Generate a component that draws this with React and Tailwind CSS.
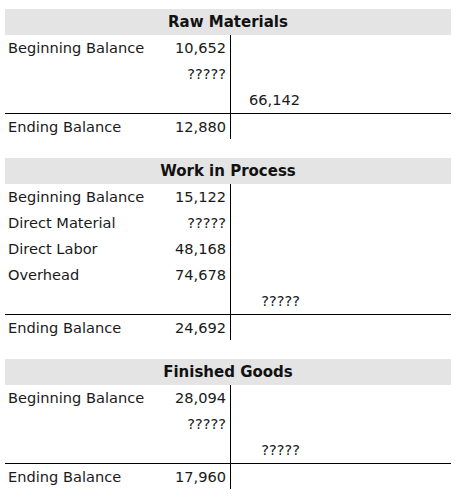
const accounts = [
  {
    title: "Raw Materials",
    rows: [
      { label: "Beginning Balance", debit: "10,652" },
      { label: "", debit: "?????" },
      { label: "", credit: "66,142" },
    ],
    ending: "12,880",
  },
  {
    title: "Work in Process",
    rows: [
      { label: "Beginning Balance", debit: "15,122" },
      { label: "Direct Material", debit: "?????" },
      { label: "Direct Labor", debit: "48,168" },
      { label: "Overhead", debit: "74,678" },
      { label: "", credit: "?????" },
    ],
    ending: "24,692",
  },
  {
    title: "Finished Goods",
    rows: [
      { label: "Beginning Balance", debit: "28,094" },
      { label: "", debit: "?????" },
      { label: "", credit: "?????" },
    ],
    ending: "17,960",
  },
];

function Row({ label, debit, credit, height = "h-[26px]" }) {
  return (
    <div className={`flex ${height}`}>
      <div className="flex w-[226px] items-center border-r border-black pr-[4px] pl-[3px]">
        <span className="flex-1">{label}</span>
        <span className="text-right">{debit}</span>
      </div>
      <div className="flex w-[69px] items-center justify-end">{credit}</div>
    </div>
  );
}

function TAccount({ account }) {
  return (
    <div className="w-[446px]">
      <div className="flex h-[26px] items-center justify-center bg-[#e4e4e4] text-[15px] font-bold text-[#111]">
        {account.title}
      </div>
      {account.rows.map((row, i) => (
        <Row key={i} {...row} />
      ))}
      <div className="border-t border-black">
        <Row label="Ending Balance" debit={account.ending} height="h-[25px]" />
      </div>
    </div>
  );
}

export default function App() {
  return (
    <div
      className="min-h-screen bg-white pt-[9px] pl-[5px] text-[14.6px] text-[#1a1a1a]"
      style={{ fontFamily: '"DejaVu Sans", Verdana, sans-serif' }}
    >
      <div className="flex flex-col gap-[19px]">
        {accounts.map((a) => (
          <TAccount key={a.title} account={a} />
        ))}
      </div>
    </div>
  );
}
